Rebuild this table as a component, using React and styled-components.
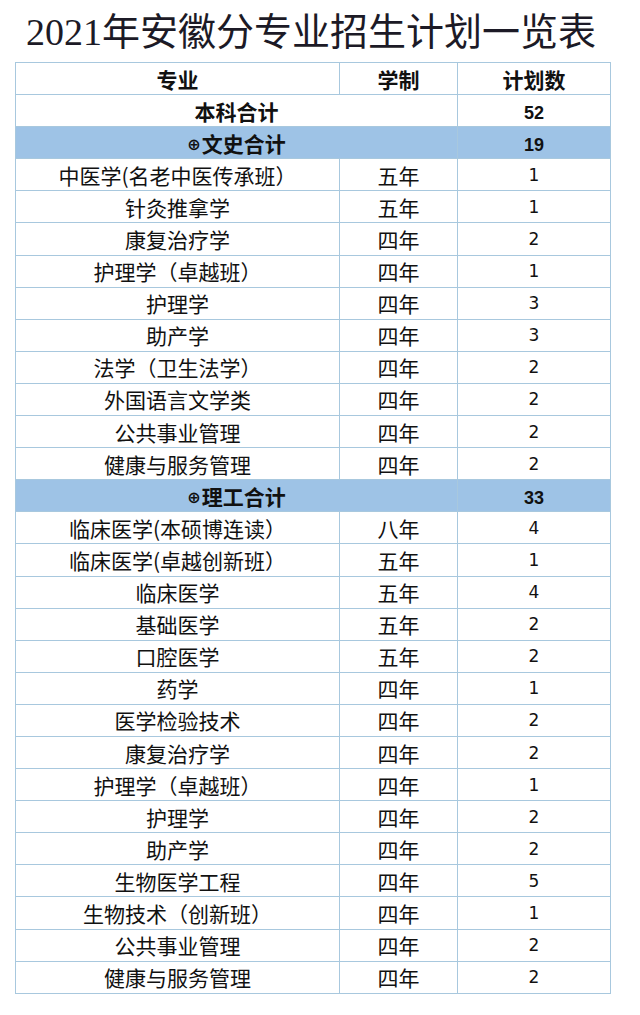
import React from "react";
import styled, { createGlobalStyle } from "styled-components";

const Global = createGlobalStyle`
  html, body { margin: 0; padding: 0; background: #ffffff; }
  body { width: 640px; height: 1015px; overflow: hidden; }
`;

const Page = styled.div`
  width: 640px;
  height: 1015px;
  display: flex;
  flex-direction: column;
  align-items: flex-start;
  background: #fff;
`;

const Title = styled.h1`
  margin: 0;
  width: 640px;
  height: 62px;
  display: flex;
  align-items: center;
  justify-content: center;
  font-family: "Liberation Serif", "Noto Sans CJK SC", serif;
  font-size: 38px;
  font-weight: 400;
  color: #1c1a26;
  padding: 0 18px 6px 0;
  box-sizing: border-box;
`;

const Table = styled.table`
  margin-left: 15px;
  width: 595px;
  border-collapse: collapse;
  table-layout: fixed;
  border: 1.5px solid #93b8d2;
`;

const Row = styled.tr`
  height: 32.1px;
  background: ${(p) => (p.$section ? "#9ec3e6" : "#ffffff")};
`;

const Cell = styled.td`
  border: 1px solid #a8c8de;
  padding: 1px 0 0;
  text-align: center;
  vertical-align: middle;
  color: #111;
  font-family: ${(p) =>
    p.$num ? '"DejaVu Sans", "Liberation Sans", sans-serif' : '"Noto Sans CJK SC", sans-serif'};
  font-size: ${(p) => (p.$num ? "17px" : "21px")};
  font-weight: ${(p) => (p.$bold ? 700 : 400)};
  line-height: 1;
`;

const BoldNum = styled.span`
  font-family: "Liberation Sans", "DejaVu Sans", sans-serif;
  font-weight: 700;
  font-size: 18px;
  color: #111;
`;

const Plus = styled.span`
  display: inline-block;
  font-family: "DejaVu Sans", sans-serif;
  font-size: 16px;
  font-weight: 700;
  vertical-align: 2px;
  margin-right: 1px;
`;

const wenshi = [
  ["中医学(名老中医传承班）", "五年", "1"],
  ["针灸推拿学", "五年", "1"],
  ["康复治疗学", "四年", "2"],
  ["护理学（卓越班）", "四年", "1"],
  ["护理学", "四年", "3"],
  ["助产学", "四年", "3"],
  ["法学（卫生法学）", "四年", "2"],
  ["外国语言文学类", "四年", "2"],
  ["公共事业管理", "四年", "2"],
  ["健康与服务管理", "四年", "2"],
];

const ligong = [
  ["临床医学(本硕博连读）", "八年", "4"],
  ["临床医学(卓越创新班）", "五年", "1"],
  ["临床医学", "五年", "4"],
  ["基础医学", "五年", "2"],
  ["口腔医学", "五年", "2"],
  ["药学", "四年", "1"],
  ["医学检验技术", "四年", "2"],
  ["康复治疗学", "四年", "2"],
  ["护理学（卓越班）", "四年", "1"],
  ["护理学", "四年", "2"],
  ["助产学", "四年", "2"],
  ["生物医学工程", "四年", "5"],
  ["生物技术（创新班）", "四年", "1"],
  ["公共事业管理", "四年", "2"],
  ["健康与服务管理", "四年", "2"],
];

const DataRows = ({ rows }) =>
  rows.map(([name, years, n], i) => (
    <Row key={i}>
      <Cell>{name}</Cell>
      <Cell>{years}</Cell>
      <Cell $num>{n}</Cell>
    </Row>
  ));

export default function App() {
  return (
    <Page>
      <Global />
      <Title>2021年安徽分专业招生计划一览表</Title>
      <Table>
        <colgroup>
          <col style={{ width: 324 }} />
          <col style={{ width: 118 }} />
          <col style={{ width: 153 }} />
        </colgroup>
        <tbody>
          <Row>
            <Cell $bold>专业</Cell>
            <Cell $bold>学制</Cell>
            <Cell $bold>计划数</Cell>
          </Row>
          <Row>
            <Cell $bold colSpan={2}>本科合计</Cell>
            <Cell><BoldNum>52</BoldNum></Cell>
          </Row>
          <Row $section>
            <Cell $bold colSpan={2}><Plus>⊕</Plus>文史合计</Cell>
            <Cell><BoldNum>19</BoldNum></Cell>
          </Row>
          <DataRows rows={wenshi} />
          <Row $section>
            <Cell $bold colSpan={2}><Plus>⊕</Plus>理工合计</Cell>
            <Cell><BoldNum>33</BoldNum></Cell>
          </Row>
          <DataRows rows={ligong} />
        </tbody>
      </Table>
    </Page>
  );
}
